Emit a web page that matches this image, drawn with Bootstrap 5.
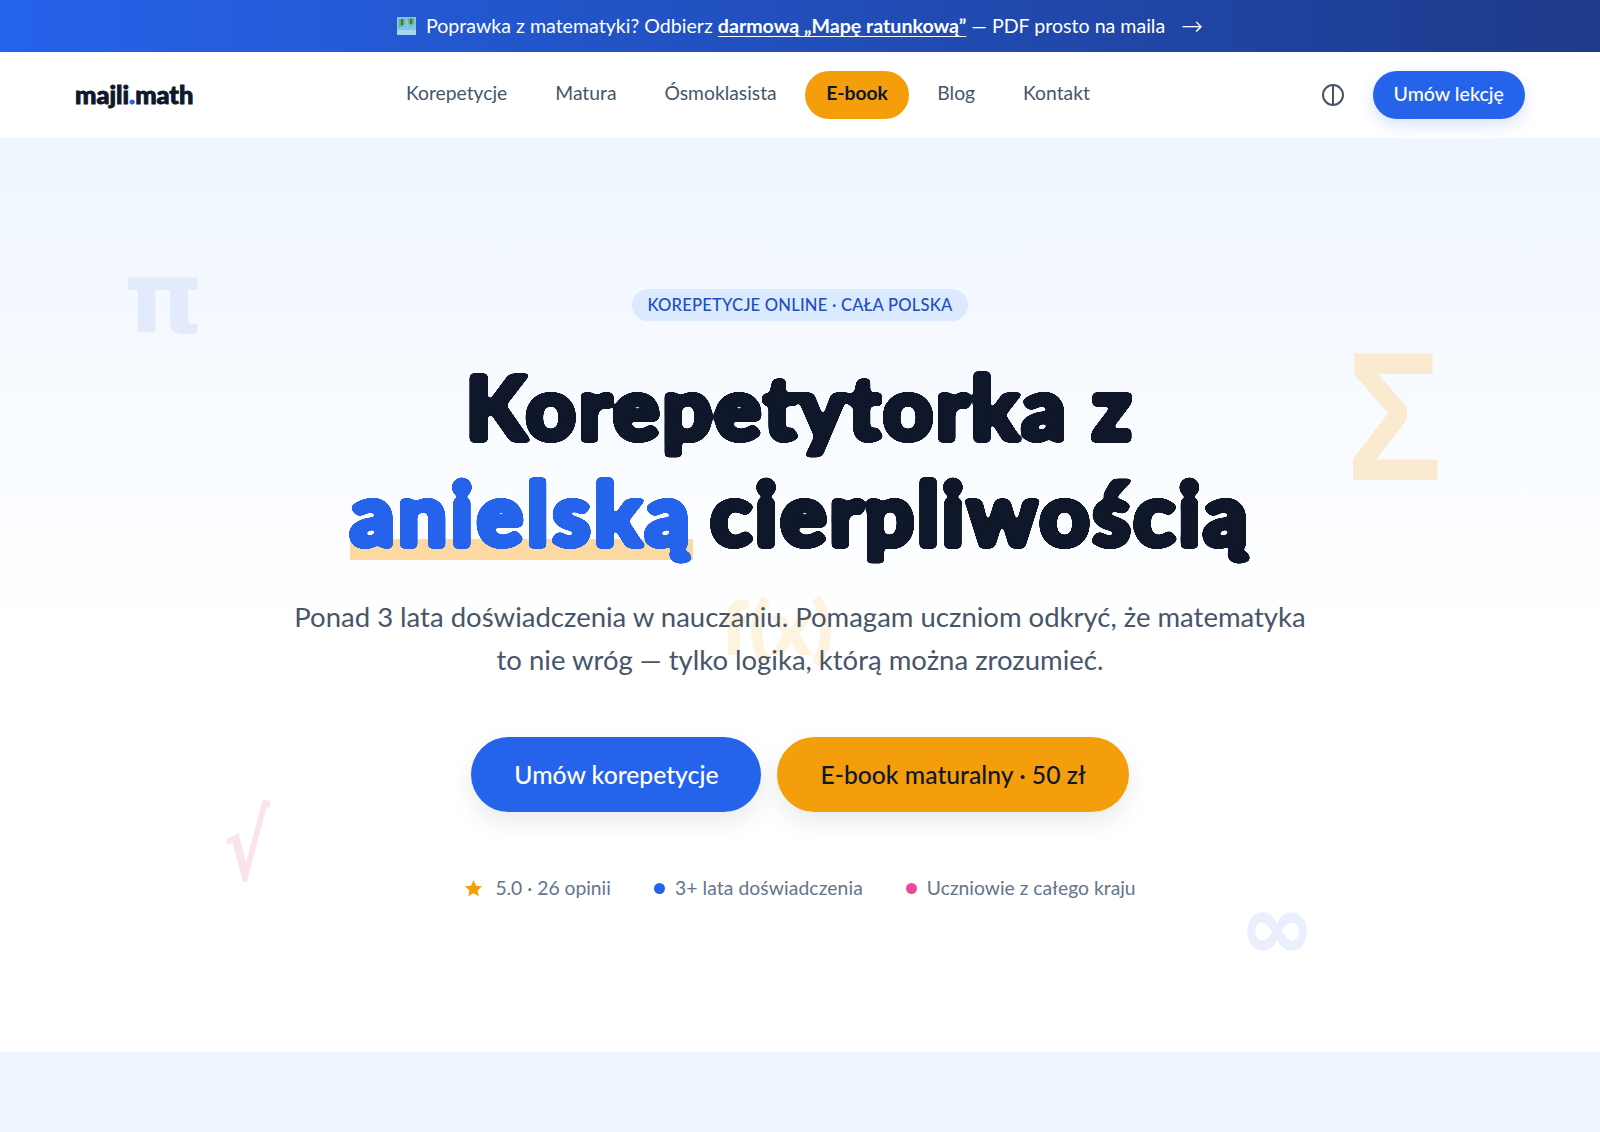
<!DOCTYPE html>
<html lang="pl">
<head>
  <meta charset="UTF-8">
  <title>majli.math</title>
  <meta name="viewport" content="width=device-width, initial-scale=1">
  <link href="https://cdn.jsdelivr.net/npm/bootstrap@5.3.3/dist/css/bootstrap.min.css" rel="stylesheet">
  <style>
    body {
      font-family: "Lato", "Noto Sans", sans-serif;
      color: #0f172a;
      background: #eff6ff;
      overflow: hidden;
    }
    .promo-bar {
      height: 52px;
      background: linear-gradient(90deg, #2563eb, #1e3a8a);
      color: #fff;
      font-size: 19.6px;
    }
    .promo-bar a { color: #fff; font-weight: 700; text-underline-offset: 3px; text-decoration-thickness: 1px; }
    .promo-icon { margin-right: 10px; }
    .promo-arrow { font-size: 26px; line-height: 1; margin-left: 11px; vertical-align: -2px; font-family: "DejaVu Sans", sans-serif; font-weight: 300; }
    .top-nav {
      height: 86px;
      padding: 0 75px;
      background: #fff;
    }
    .brand-logo {
      width: 200px;
      padding-bottom: 2px;
      font-family: "Lato", sans-serif;
      font-weight: 900;
      font-size: 25.4px;
      color: #0f172a;
      -webkit-text-stroke: .9px #0f172a;
      text-decoration: none;
    }
    .brand-logo span { color: #2563eb; -webkit-text-stroke-color: #2563eb; }
    .menu-links { margin-left: 107px; }
    .menu-links a {
      padding: 0 24px;
      height: 48px;
      line-height: 44px;
      font-size: 19.3px;
      color: #475569;
      text-decoration: none;
      border-radius: 24px;
    }
    .menu-links a.menu-ebook { background: #f59e0b; color: #0f172a; font-weight: 700; padding: 0 21.5px; margin: 0 4px; }
    .pill-btn { border: 0; border-radius: 999px; font-weight: 500; }
    .pill-blue { background: #2563eb; color: #fff; }
    .pill-amber { background: #f59e0b; color: #0f172a; }
    .nav-cta {
      height: 48px;
      padding: 0 21px 3px;
      font-size: 19.6px;
      box-shadow: 0 6px 16px rgba(37, 99, 235, .18);
    }
    .theme-toggle { width: 48px; height: 48px; background: none; border: 0; padding: 0; margin-right: 16px; }
    .hero {
      position: relative;
      height: 914px;
      padding-top: 151px;
      background: linear-gradient(180deg, #eff6ff 0%, #fff 55%);
      overflow: hidden;
    }
    .hero-tag {
      height: 32px;
      padding: 0 16px;
      line-height: 32px;
      border-radius: 16px;
      background: #dbeafe;
      color: #1e4fc0;
      font-size: 16.6px;
      font-weight: 500;
      letter-spacing: .2px;
    }
    .hero-title {
      margin: 33px 0 0;
      font-family: "Lato", sans-serif;
      font-weight: 900;
      font-size: 87.5px;
      line-height: 106px;
      color: #0f172a;
      -webkit-text-stroke: 4.4px currentColor;
      letter-spacing: 2.4px;
    }
    .title-round { display: inline-block; filter: url(#soften); }
    .hero-hl {
      position: relative;
      display: inline-block;
      margin-right: -6px;
      color: #2563eb;
      letter-spacing: 3.2px;
      z-index: 0;
    }
    .hero-hl::after {
      content: "";
      position: absolute;
      left: 0;
      right: 0;
      bottom: 6px;
      height: 21px;
      background: #fcd9a0;
      z-index: -1;
    }
    .hero-sub {
      margin: 29px auto 0;
      font-size: 27.5px;
      line-height: 43px;
      color: #475569;
    }
    .hero-actions { margin-top: 56px; gap: 16px; }
    .hero-btn {
      height: 75px;
      padding: 0 43px;
      font-size: 24.7px;
      box-shadow: 0 10px 24px rgba(15, 23, 42, .09);
    }
    .hero-stats { margin-top: 62px; gap: 43px; font-size: 19.3px; color: #64748b; }
    .hero-stats > span { gap: 10px; }
    .hero-stats > span:first-child { gap: 12px; }
    .stat-wide { letter-spacing: .1px; }
    .stat-dot { width: 11px; height: 11px; border-radius: 50%; }
    .dot-blue { background: #2563eb; }
    .dot-pink { background: #ec4899; }
    .float-sym { position: absolute; line-height: 1; font-weight: 700; z-index: 0; }
    .sym-pi { left: 124px; top: 111px; font-size: 100px; color: #e2ebfb; font-family: "DejaVu Sans", sans-serif; }
    .sym-sigma { left: 1346px; top: 199px; font-size: 160px; color: #f9ead0; font-family: "Liberation Sans", sans-serif; transform: scaleY(1.15); }
    .sym-fx { left: 722px; top: 452px; font-size: 72px; color: #fef3de; font-weight: 900; letter-spacing: 2px; -webkit-text-stroke: 2px #fef3de; }
    .sym-root { left: 224px; top: 662px; font-size: 95px; color: #fbe3ee; font-family: "DejaVu Sans", sans-serif; transform: scaleX(.72); transform-origin: left top; }
    .sym-inf { left: 1240px; top: 745px; font-size: 89px; color: #e9effc; font-family: "DejaVu Sans", sans-serif; -webkit-text-stroke: 1.5px #e9effc; }
    .hero-inner { position: relative; z-index: 1; }
  </style>
</head>
<body>

<svg width="0" height="0" class="position-absolute">
  <filter id="soften" x="-5%" y="-10%" width="110%" height="120%" color-interpolation-filters="sRGB">
    <feGaussianBlur stdDeviation="2"/>
    <feColorMatrix values="1 0 0 0 0  0 1 0 0 0  0 0 1 0 0  0 0 0 16 -6"/>
  </filter>
</svg>

<!-- promo bar -->
<div class="promo-bar d-flex align-items-center justify-content-center">
  <svg width="19" height="18" viewBox="0 0 19 18" class="promo-icon">
    <rect width="19" height="18" fill="#7cc4e8"/>
    <path d="M2 2h6v5l-3 3H2zM11 1h6v6l-3 2-3-3z" fill="#6fb07a"/>
    <path d="M5 2v6M14 2v5" stroke="#3a5a40" stroke-width="1.5"/>
    <rect y="13" width="19" height="5" fill="#a5d8f0"/>
  </svg>
  <span>Poprawka z matematyki? Odbierz <a href="#">darmową „Mapę ratunkową”</a> — PDF prosto na maila <span class="promo-arrow">→</span></span>
</div>

<!-- nav -->
<nav class="top-nav d-flex align-items-center">
  <a href="#" class="brand-logo">majli<span>.</span>math</a>
  <div class="menu-links d-flex align-items-center">
    <a href="#">Korepetycje</a>
    <a href="#">Matura</a>
    <a href="#">Ósmoklasista</a>
    <a href="#" class="menu-ebook">E-book</a>
    <a href="#">Blog</a>
    <a href="#">Kontakt</a>
  </div>
  <div class="ms-auto d-flex align-items-center">
    <button class="theme-toggle d-flex align-items-center justify-content-center" aria-label="Motyw">
      <svg width="24" height="24" viewBox="0 0 24 24" fill="none" stroke="#475569" stroke-width="2"><circle cx="12" cy="12" r="10"/><path d="M12 2v20"/></svg>
    </button>
    <button class="pill-btn pill-blue nav-cta">Umów lekcję</button>
  </div>
</nav>

<!-- hero -->
<section class="hero text-center">
  <span class="float-sym sym-pi">π</span>
  <span class="float-sym sym-sigma">Σ</span>
  <span class="float-sym sym-fx">f(x)</span>
  <span class="float-sym sym-root">√</span>
  <span class="float-sym sym-inf">∞</span>

  <div class="hero-inner">
    <span class="hero-tag d-inline-block">KOREPETYCJE ONLINE · CAŁA POLSKA</span>
    <h1 class="hero-title"><span class="title-round">Korepetytorka z</span><br><span class="hero-hl"><span class="title-round">anielską</span></span> <span class="title-round">cierpliwością</span></h1>
    <p class="hero-sub">Ponad 3 lata doświadczenia w nauczaniu. Pomagam uczniom odkryć, że matematyka<br>to nie wróg — tylko logika, którą można zrozumieć.</p>
    <div class="hero-actions d-flex justify-content-center">
      <button class="pill-btn pill-blue hero-btn">Umów korepetycje</button>
      <button class="pill-btn pill-amber hero-btn">E-book maturalny · 50 zł</button>
    </div>
    <div class="hero-stats d-flex justify-content-center align-items-center">
      <span class="d-flex align-items-center">
        <svg width="19" height="19" viewBox="0 0 24 24" fill="#f59e0b"><path d="M12 1.500l3.200 7 7.600.8-5.700 5.100 1.600 7.500L12 18l-6.700 3.900 1.600-7.500L1.200 9.300l7.600-.8z"/></svg>
        5.0 · 26 opinii
      </span>
      <span class="d-flex align-items-center stat-wide"><i class="stat-dot dot-blue"></i>3+ lata doświadczenia</span>
      <span class="d-flex align-items-center"><i class="stat-dot dot-pink"></i>Uczniowie z całego kraju</span>
    </div>
  </div>
</section>

<script src="https://cdn.jsdelivr.net/npm/bootstrap@5.3.3/dist/js/bootstrap.bundle.min.js"></script>
</body>
</html>
